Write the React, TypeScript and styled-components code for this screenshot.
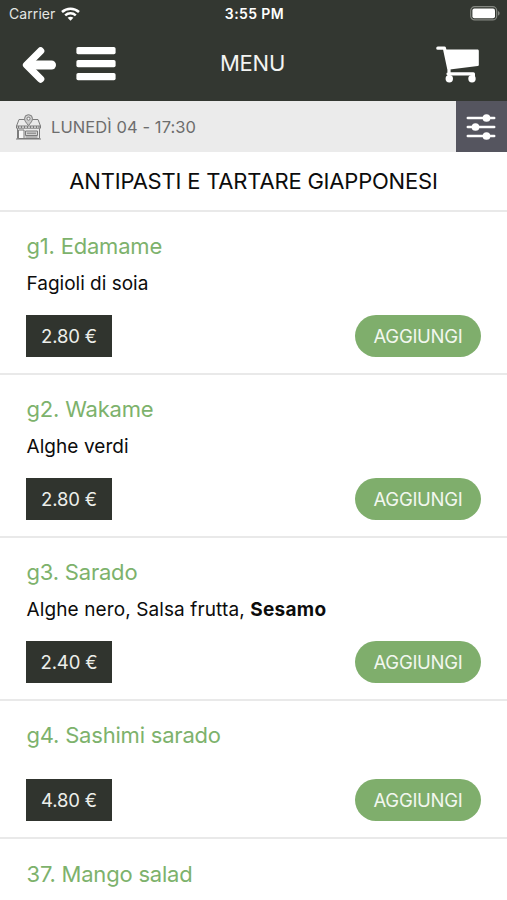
import React from 'react';
import styled, { createGlobalStyle } from 'styled-components';

const GlobalStyle = createGlobalStyle`
  * { box-sizing: border-box; }
  body {
    margin: 0;
    background: #fff;
    color: #0c0c0c;
    font-family: Inter, Roboto, sans-serif;
    overflow: hidden;
  }
  h1, h2, h3, p { margin: 0; font-weight: 400; }
  button { font: inherit; border: 0; padding: 0; background: none; color: inherit; }
  svg { display: block; }
`;

const Screen = styled.div`
  width: 507px;
  height: 900px;
  overflow: hidden;
  background: #fff;
`;

const Header = styled.header`
  height: 101px;
  background: #333731;
  color: #fff;
`;

const StatusBar = styled.div`
  display: grid;
  grid-template-columns: 1fr auto 1fr;
  align-items: center;
  height: 27px;
  padding: 0 7px 0 9px;
  font-size: 14px;
  line-height: 27px;
`;

const Carrier = styled.div`
  display: flex;
  align-items: center;
  gap: 6px;
  height: 26px;
  line-height: 26px;
  color: #e4e6e3;
  letter-spacing: 0.08px;
`;

const Clock = styled.span`
  font-size: 14px;
  font-weight: 600;
  letter-spacing: 0.4px;
`;

const Battery = styled.div`
  justify-self: end;
`;

const NavBar = styled.nav`
  display: grid;
  grid-template-columns: 1fr auto 1fr;
  align-items: center;
  height: 74px;
  padding: 1px 27px 0 22px;
`;

const NavLeft = styled.div`
  display: flex;
  align-items: center;
  gap: 19px;
`;

const NavRight = styled.div`
  justify-self: end;
  padding-top: 4px;
`;

const NavTitle = styled.h1`
  padding: 0 0 3px 3px;
  font-size: 22px;
  line-height: 28px;
  letter-spacing: -0.2px;
  color: #f3f4f2;
`;

const InfoBar = styled.div`
  display: flex;
  height: 51px;
  background: #ebebeb;
`;

const Slot = styled.div`
  flex: 1;
  display: flex;
  align-items: center;
  gap: 9px;
  padding-left: 15px;
  font-size: 16.5px;
  letter-spacing: 0.08px;
  color: #6d6d6d;
`;

const FilterButton = styled.button`
  display: flex;
  align-items: center;
  justify-content: center;
  width: 51px;
  padding-right: 2px;
  background: #55555f;
`;

const Category = styled.h2`
  height: 60px;
  border-bottom: 2px solid #e9e9e9;
  font-size: 22px;
  line-height: 58px;
  letter-spacing: -0.2px;
  text-align: center;
`;

const Dish = styled.article`
  padding: 19px 26px 16px;
  border-bottom: 2px solid #e9e9e9;

  &:last-child { padding-top: 20px; }
`;

const DishName = styled.h3`
  padding-left: 0.5px;
  font-size: 22px;
  line-height: 30px;
  letter-spacing: -0.2px;
  color: #7db26c;
`;

const Ingredients = styled.p<{ $spacing: number }>`
  height: 25px;
  margin-top: 10px;
  padding-left: 0.5px;
  font-size: 19px;
  line-height: 25px;
  letter-spacing: ${(p) => p.$spacing}px;
  color: #0c0c0c;
  white-space: nowrap;
  b { font-weight: 700; letter-spacing: 0.3px; }
`;

const DishFooter = styled.div<{ $gap: number }>`
  display: flex;
  justify-content: space-between;
  margin-top: ${(p) => p.$gap}px;
`;

const Price = styled.div`
  width: 86px;
  height: 42px;
  background: #30342e;
  color: #eceeea;
  font-size: 18.5px;
  line-height: 42px;
  letter-spacing: -0.15px;
  text-align: center;
`;

const AddButton = styled.button`
  width: 126px;
  height: 42px;
  border-radius: 21px;
  background: #7fae6c;
  color: #f2f7ef;
  font-size: 18.5px;
  line-height: 42px;
  letter-spacing: -0.28px;
`;

const WifiIcon = () => (
  <svg width="19" height="14" viewBox="0 0 19 14" fill="none" stroke="#fff" strokeWidth="2.5">
    <path d="M1 5C5.8.6 13.2.6 18 5" />
    <path d="M4.2 8.4c3-2.8 7.6-2.8 10.6 0" />
    <path d="M9.5 13.8 6.6 10.8c1.7-1.5 4.1-1.5 5.8 0Z" fill="#fff" stroke="none" />
  </svg>
);

const BatteryIcon = () => (
  <svg width="30" height="15" viewBox="0 0 30 15">
    <rect x=".7" y=".7" width="26" height="13.2" rx="4" fill="none" stroke="#848781" strokeWidth="1.2" />
    <rect x="2.4" y="2.4" width="22.6" height="9.8" rx="2" fill="#fff" />
    <path d="M28 5v4.6c1-.4 1.6-1.3 1.6-2.3S29 5.4 28 5Z" fill="#848781" />
  </svg>
);

const BackIcon = () => (
  <svg width="35" height="38" viewBox="0 0 35 38" fill="none" stroke="#fff" strokeLinecap="round" strokeLinejoin="round">
    <path d="M18.6 5 4.6 19l14 14" strokeWidth="7.4" />
    <path d="M7 19h22.5" strokeWidth="9" />
  </svg>
);

const MenuIcon = () => (
  <svg width="40" height="36" viewBox="0 0 40 36" fill="#fff">
    <rect x=".4" y="0" width="39.2" height="7.2" rx="1.7" />
    <rect x=".4" y="13" width="39.2" height="7.2" rx="1.7" />
    <rect x=".4" y="26" width="39.2" height="7.2" rx="1.7" />
  </svg>
);

const CartIcon = () => (
  <svg width="44" height="37" viewBox="0 0 44 37">
    <path d="M1.8 2.2h6.6l4.6 21.5v5M12 27.800h25.400v3" fill="none" stroke="#fff" strokeWidth="3.2" strokeLinecap="round" strokeLinejoin="round" />
    <path d="M9 3.6h32.500c.8 0 1.300.6 1.300 1.300v14c0 .7-.4 1.100-1.100 1.200L13.800 23.600Z" fill="#fff" />
    <circle cx="13.3" cy="32.8" r="3.7" fill="#fff" />
    <circle cx="36" cy="32.8" r="3.7" fill="#fff" />
  </svg>
);

const FilterIcon = () => (
  <svg width="30" height="26" viewBox="0 0 30 26" fill="#fff" stroke="#fff" strokeWidth="2.5" strokeLinecap="round">
    <path d="M1.8 4h26.4M1.8 13h26.4M1.8 22h26.4" />
    <circle cx="20.5" cy="4" r="2.6" />
    <circle cx="9.5" cy="13" r="2.6" />
    <circle cx="20.5" cy="22" r="2.6" />
  </svg>
);

const StoreIcon = () => (
  <svg width="27" height="26" viewBox="0 0 27 26" fill="none" stroke="#7b7b7b" strokeWidth="1">
    <path d="M9 5.5H4L1.5 12h24L23 5.5h-5" />
    <path d="M1.5 12v2.2h24V12M3.5 12v2M6.5 12v2M9.5 12v2M12.5 12v2M15.5 12v2M18.5 12v2M21.5 12v2M24 12v2" />
    <path d="M2.5 14.5v10h22v-10M1 25h25" />
    <path d="M3.500 16h5.500v8.500h-5.500z" fill="#f7f7f7" />
    <path d="M10.5 17h12v4.500h-12z" fill="#d2d2d2" />
    <path d="M10.500 23h12M12 19.200h9" />
    <path d="M13.5 11.5C11 8.5 9.5 6.8 9.5 4.7a4 4 0 0 1 8 0c0 2.1-1.5 3.8-4 6.8Z" fill="#ccc" />
    <circle cx="13.5" cy="4.7" r="1.5" fill="#f7f7f7" />
  </svg>
);

interface DishData {
  name: string;
  text?: React.ReactNode;
  textSpacing?: number;
  price?: string;
}

const dishes: DishData[] = [
  { name: 'g1. Edamame', text: 'Fagioli di soia', textSpacing: 0, price: '2.80 €' },
  { name: 'g2. Wakame', text: 'Alghe verdi', textSpacing: 0.06, price: '2.80 €' },
  {
    name: 'g3. Sarado',
    text: <>Alghe nero, Salsa frutta, <b>Sesamo</b></>,
    textSpacing: 0.11,
    price: '2.40 €',
  },
  { name: 'g4. Sashimi sarado', price: '4.80 €' },
  { name: '37. Mango salad' },
];

export default function App() {
  return (
    <>
      <GlobalStyle />
      <Screen>
        <Header>
          <StatusBar>
            <Carrier>Carrier <WifiIcon /></Carrier>
            <Clock>3:55 PM</Clock>
            <Battery><BatteryIcon /></Battery>
          </StatusBar>
          <NavBar>
            <NavLeft>
              <button aria-label="Indietro"><BackIcon /></button>
              <button aria-label="Apri menu"><MenuIcon /></button>
            </NavLeft>
            <NavTitle>MENU</NavTitle>
            <NavRight>
              <button aria-label="Carrello"><CartIcon /></button>
            </NavRight>
          </NavBar>
        </Header>
        <InfoBar>
          <Slot><StoreIcon /><span>LUNEDÌ 04 - 17:30</span></Slot>
          <FilterButton aria-label="Filtri"><FilterIcon /></FilterButton>
        </InfoBar>
        <Category>ANTIPASTI E TARTARE GIAPPONESI</Category>
        {dishes.map((dish) => (
          <Dish key={dish.name}>
            <DishName>{dish.name}</DishName>
            {dish.text && <Ingredients $spacing={dish.textSpacing ?? 0}>{dish.text}</Ingredients>}
            {dish.price && (
              <DishFooter $gap={dish.text ? 19 : 29}>
                <Price>{dish.price}</Price>
                <AddButton>AGGIUNGI</AddButton>
              </DishFooter>
            )}
          </Dish>
        ))}
      </Screen>
    </>
  );
}
